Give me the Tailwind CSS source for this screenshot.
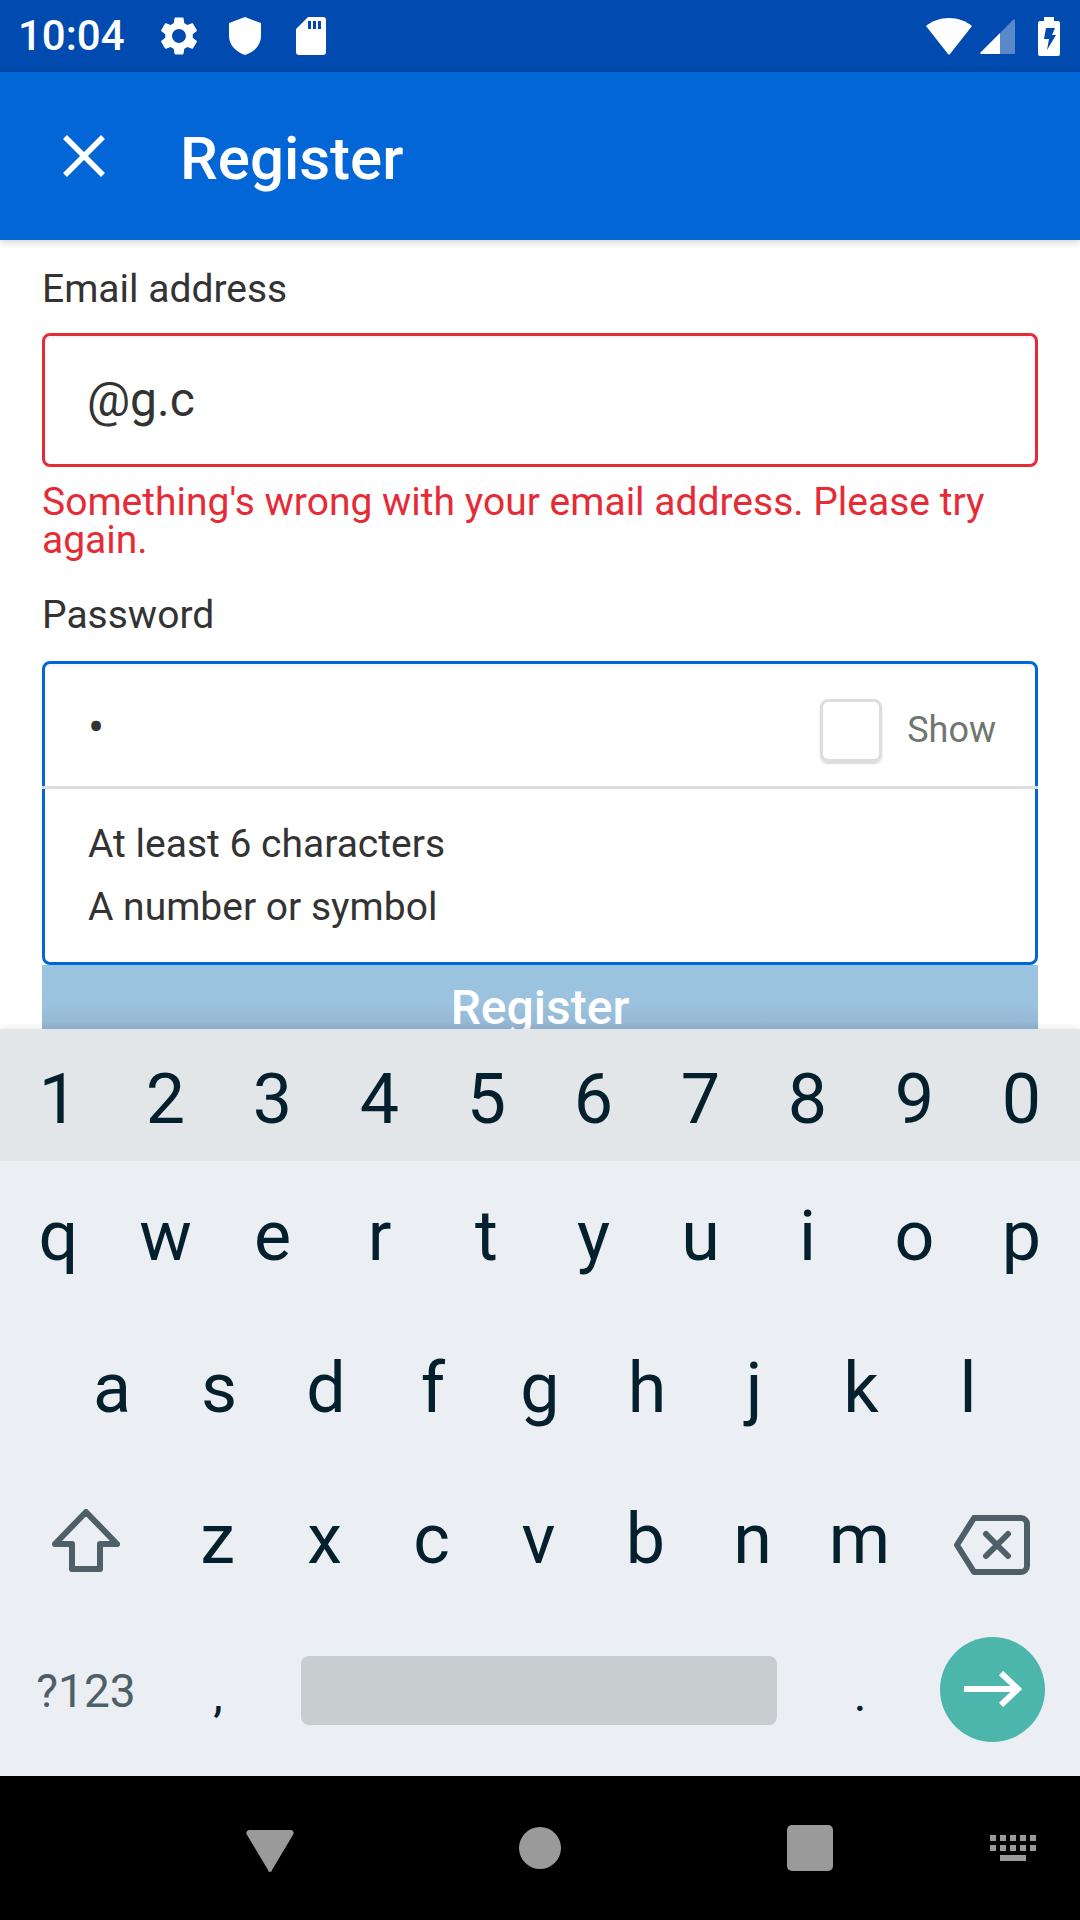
<!DOCTYPE html>
<html lang="en">
<head>
  <meta charset="UTF-8" />
  <title>Register</title>
  <script src="https://cdn.jsdelivr.net/npm/@tailwindcss/browser@4"></script>
</head>
<body class="bg-white font-['Roboto',sans-serif]">
  <div class="relative w-[1080px] h-[1920px] overflow-hidden flex flex-col">
    <!-- status bar -->
    <div class="h-[72px] bg-[#014aaf] flex items-center justify-between text-white shrink-0">
      <div class="flex items-center pl-[18px]">
        <span class="text-[42px] font-medium leading-none w-[138px]">10:04</span>
        <svg class="w-[46px] h-[46px]" viewBox="0 0 24 24" fill="#fff"><path d="M19.14 12.94c.04-.3.06-.61.06-.94 0-.32-.02-.64-.07-.94l2.03-1.58c.18-.14.23-.41.12-.61l-1.92-3.32c-.12-.22-.37-.29-.59-.22l-2.39.96c-.5-.38-1.03-.7-1.62-.94l-.36-2.54c-.04-.24-.24-.41-.48-.41h-3.84c-.24 0-.43.17-.47.41l-.36 2.54c-.59.24-1.13.57-1.62.94l-2.39-.96c-.22-.08-.47 0-.59.22L2.74 8.87c-.12.21-.08.47.12.61l2.03 1.58c-.05.3-.09.63-.09.94s.02.64.07.94l-2.03 1.58c-.18.14-.23.41-.12.61l1.92 3.32c.12.22.37.29.59.22l2.39-.96c.5.38 1.03.7 1.62.94l.36 2.54c.05.24.24.41.48.41h3.84c.24 0 .44-.17.47-.41l.36-2.54c.59-.24 1.13-.56 1.62-.94l2.39.96c.22.08.47 0 .59-.22l1.92-3.32c.12-.22.07-.47-.12-.61l-2.01-1.58zM12 15.6c-1.98 0-3.6-1.62-3.6-3.6s1.62-3.6 3.6-3.6 3.6 1.62 3.6 3.6-1.62 3.6-3.6 3.6z"/></svg>
        <svg class="ml-[27px] w-[32px] h-[38px]" viewBox="0 0 32 38" fill="#fff"><path d="M16 0 32 6v13c0 9-7 16-16 19C7 35 0 28 0 19V6z"/></svg>
        <svg class="ml-[35px] w-[30px] h-[38px]" viewBox="0 0 30 38" fill="#fff"><path fill-rule="evenodd" d="M12 0h15a3 3 0 0 1 3 3v32a3 3 0 0 1-3 3H3a3 3 0 0 1-3-3V12zM12 4v8h3V4zM17 4v8h3V4zM22 4v8h3V4z"/></svg>
      </div>
      <div class="flex items-center">
        <svg class="w-[46px] h-[37px] ml-0" viewBox="0 0 46 37" fill="#fff"><path d="M23 0c9 0 17 3 23 8L24 36a1.400 1.400 0 0 1-2 0L0 8C6 3 14 0 23 0z"/></svg>
        <svg class="ml-[8px] w-[35px] h-[35px]" viewBox="0 0 35 35"><path fill="#fff" d="M0 34 20 14V35H1z"/><path fill="#fff" fill-opacity=".35" d="M20 14 33 1c1-1 2-1 2 1V35H20z"/></svg>
        <svg class="ml-[23px] mr-[20px] w-[22px] h-[39px]" viewBox="0 0 22 39"><path fill="#fff" d="M6 0h10v4h4a2 2 0 0 1 2 2v31a2 2 0 0 1-2 2H2a2 2 0 0 1-2-2V6a2 2 0 0 1 2-2h4z"/><path fill="#014aaf" d="M8 11h9l-3 7h4l-9 15 2-11H6z"/></svg>
      </div>
    </div>

    <!-- app bar -->
    <header class="h-[168px] bg-[#0366d6] flex items-center shrink-0 shadow-[0_2px_8px_rgba(0,0,0,0.2)] z-10">
      <svg class="ml-[63px] w-[42px] h-[42px]" viewBox="0 0 42 42" stroke="#fff" stroke-width="5.500" fill="none"><path d="M2 2 40 40M40 2 2 40"/></svg>
      <h1 class="ml-[75px] pt-[5px] text-[60px] font-medium leading-none text-white">Register</h1>
    </header>

    <!-- form -->
    <main class="h-[789px] shrink-0 overflow-hidden px-[42px] text-[#333]">
      <label class="block mt-[27px] h-[44px] text-[39px] leading-[44px]">Email address</label>
      <div class="mt-[22px] h-[134px] border-[3px] border-[#e62b36] rounded-[8px] flex items-center pl-[42px] text-[48px] shadow-[inset_0_3px_3px_rgba(0,0,0,0.04)]">@g.c</div>
      <p class="mt-[16px] text-[39px] leading-[38px] text-[#e62b36]">Something's wrong with your email address. Please try again.</p>
      <label class="block mt-[34px] h-[44px] text-[39px] leading-[44px]">Password</label>
      <div class="mt-[24px] h-[304px] border-[3px] border-[#0366d6] rounded-[8px] shadow-[inset_0_3px_3px_rgba(0,0,0,0.04)]">
        <div class="h-[125px] pt-[10px] border-b-[3px] border-[#ddd] -mx-[3px] px-[46px] flex items-center">
          <span class="text-[48px] leading-none -mt-[4px]">•</span>
          <span class="ml-auto w-[62px] h-[63px] rounded-[8px] border-[3px] border-[#ddd] shadow-[0_2px_2px_rgba(0,0,0,0.15)]"></span>
          <span class="ml-[25px] mr-[-4px] text-[36px] text-[#71756f]">Show</span>
        </div>
        <ul class="pl-[43px] pt-[24px] text-[39px] leading-[63px]">
          <li>At least 6 characters</li>
          <li>A number or symbol</li>
        </ul>
      </div>
      <button class="block w-full h-[64px] pt-[10px] bg-[linear-gradient(to_bottom,#9ac5e0_0%,#9bc2de_60%,#94b5d2_100%)] text-white text-[48px] font-medium leading-[66px] text-center">Register</button>
    </main>

    <!-- keyboard -->
    <section class="h-[747px] shrink-0 bg-[#ebeff3] text-[#04202c] text-[70px] leading-none z-10 shadow-[0_-2px_6px_rgba(0,0,0,0.08)]">
      <div class="h-[132px] pt-[8px] bg-[#e2e6e9] flex items-center justify-center">
        <span class="w-[107px] text-center">1</span><span class="w-[107px] text-center">2</span><span class="w-[107px] text-center">3</span><span class="w-[107px] text-center">4</span><span class="w-[107px] text-center">5</span><span class="w-[107px] text-center">6</span><span class="w-[107px] text-center">7</span><span class="w-[107px] text-center">8</span><span class="w-[107px] text-center">9</span><span class="w-[107px] text-center">0</span>
      </div>
      <div class="h-[150px] flex items-center justify-center">
        <span class="w-[107px] text-center">q</span><span class="w-[107px] text-center">w</span><span class="w-[107px] text-center">e</span><span class="w-[107px] text-center">r</span><span class="w-[107px] text-center">t</span><span class="w-[107px] text-center">y</span><span class="w-[107px] text-center">u</span><span class="w-[107px] text-center">i</span><span class="w-[107px] text-center">o</span><span class="w-[107px] text-center">p</span>
      </div>
      <div class="h-[153px] flex items-center justify-center">
        <span class="w-[107px] text-center">a</span><span class="w-[107px] text-center">s</span><span class="w-[107px] text-center">d</span><span class="w-[107px] text-center">f</span><span class="w-[107px] text-center">g</span><span class="w-[107px] text-center">h</span><span class="w-[107px] text-center">j</span><span class="w-[107px] text-center">k</span><span class="w-[107px] text-center">l</span>
      </div>
      <div class="h-[154px] pb-[5px] flex items-center">
        <span class="w-[172px] mt-[5px] flex justify-center">
          <svg class="w-[68px] h-[64px]" viewBox="0 0 68 64" fill="none" stroke="#4e5f68" stroke-width="6" stroke-linejoin="round"><path d="M34 3 65 35H48V60H20V35H3z"/></svg>
        </span>
        <span class="w-[107px] text-center -ml-[8px]">z</span><span class="w-[107px] text-center">x</span><span class="w-[107px] text-center">c</span><span class="w-[107px] text-center">v</span><span class="w-[107px] text-center">b</span><span class="w-[107px] text-center">n</span><span class="w-[107px] text-center">m</span>
        <span class="w-[158px] mt-[13px] flex justify-center">
          <svg class="w-[76px] h-[60px]" viewBox="0 0 76 60" fill="none" stroke="#4e5f68" stroke-width="6" stroke-linejoin="round" stroke-linecap="round"><path d="M20 3H67a6 6 0 0 1 6 6V51a6 6 0 0 1-6 6H20L3 30zM32 19 54 41M54 19 32 41"/></svg>
        </span>
      </div>
      <div class="h-[142px] flex items-center">
        <span class="w-[172px] text-center text-[46px] text-[#4e5f68] mt-[4px]">?123</span>
        <span class="w-[92px] text-center text-[48px] mt-[12px]">,</span>
        <span class="ml-[37px] mt-[2px] w-[476px] h-[69px] rounded-[8px] bg-[#c8cdd0]"></span>
        <span class="ml-[30px] w-[106px] text-center text-[48px] mt-[12px]">.</span>
        <span class="ml-[27px] w-[105px] h-[105px] rounded-full bg-[#4db6ac] flex items-center justify-center">
          <svg class="w-[58px] h-[36px]" viewBox="0 0 58 36" fill="none" stroke="#fff" stroke-width="6"><path d="M0 18H54M37 2 54 18 37 34"/></svg>
        </span>
      </div>
    </section>

    <!-- nav bar -->
    <nav class="h-[144px] bg-black relative shrink-0 z-10">
      <svg class="absolute left-[246px] top-[54px] w-[48px] h-[42px]" viewBox="0 0 48 42" fill="#9a9a9a"><path d="M3 0H45a3 3 0 0 1 2.500 4L26 40a2 2 0 0 1-4 0L.5 4A3 3 0 0 1 3 0z"/></svg>
      <span class="absolute left-[519px] top-[51px] w-[42px] h-[42px] rounded-full bg-[#9a9a9a]"></span>
      <span class="absolute left-[787px] top-[49px] w-[46px] h-[46px] rounded-[5px] bg-[#9a9a9a]"></span>
      <svg class="absolute left-[990px] top-[59px] w-[46px] h-[26px]" viewBox="0 0 46 26" fill="#9a9a9a"><path d="M0 0h6v6H0zM10 0h6v6h-6zM20 0h6v6h-6zM30 0h6v6h-6zM40 0h6v6h-6zM0 10h6v6H0zM10 10h6v6h-6zM20 10h6v6h-6zM30 10h6v6h-6zM40 10h6v6h-6zM10 20h26v6H10z"/></svg>
    </nav>
  </div>
</body>
</html>
